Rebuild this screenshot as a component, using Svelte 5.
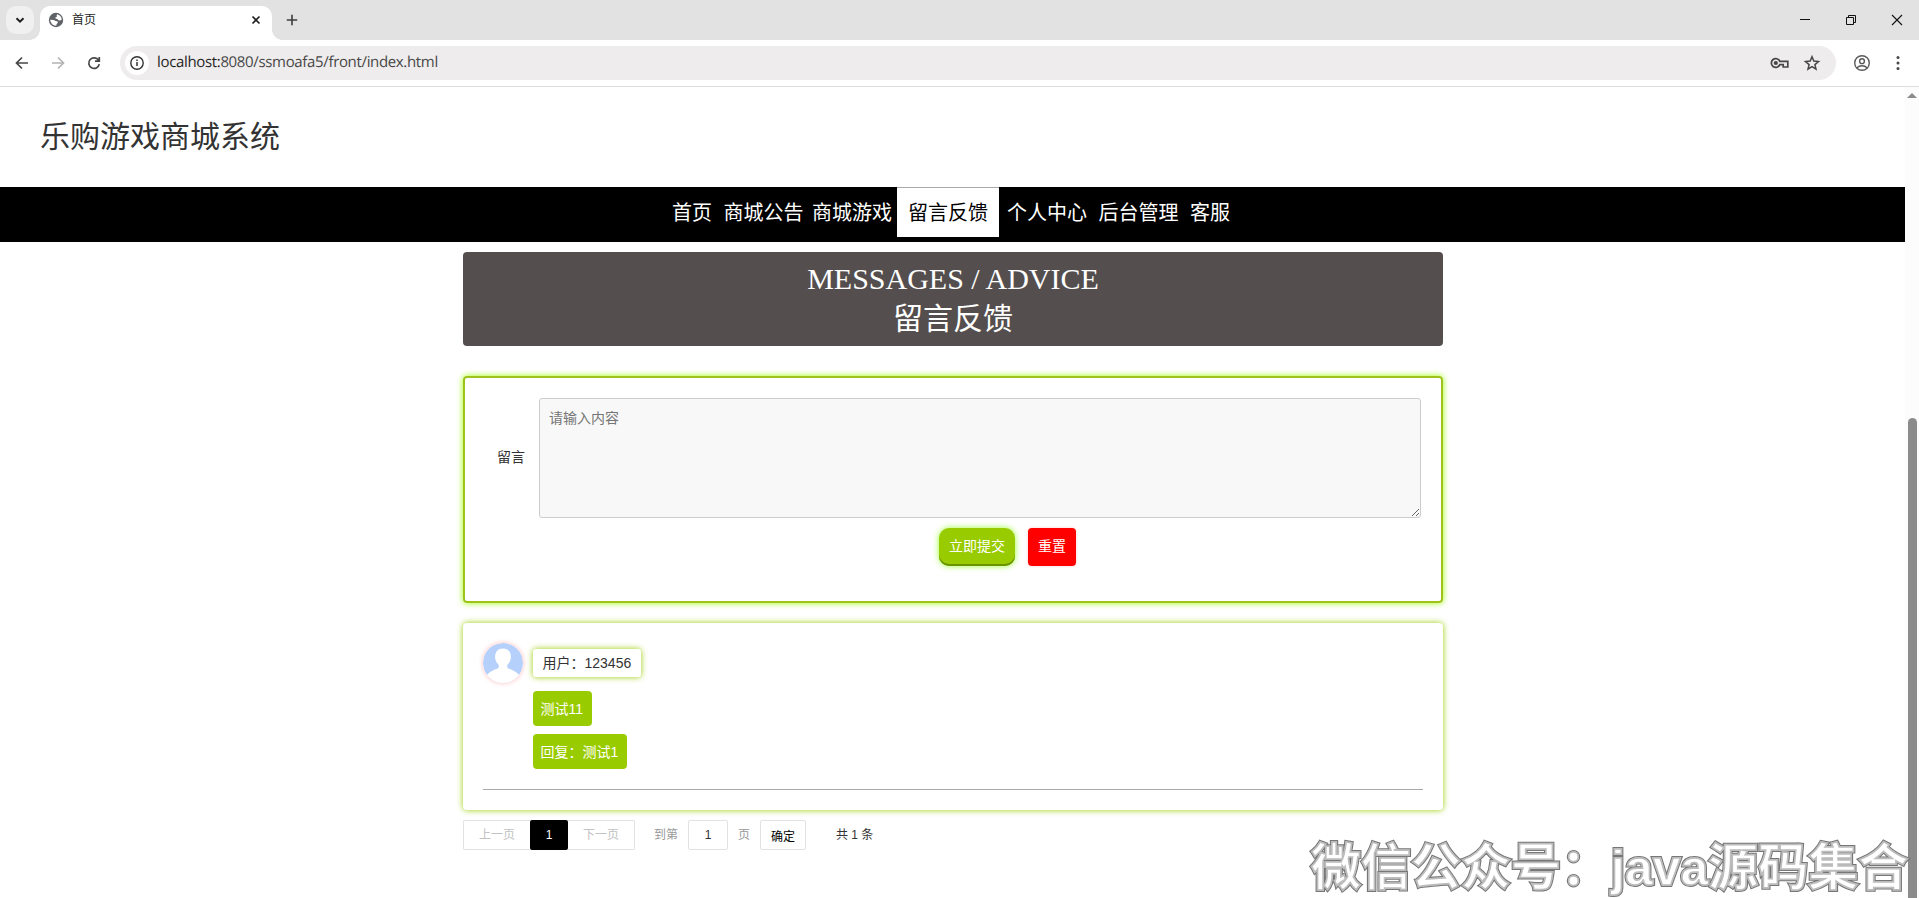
<script>
  const nav = [
    { label: '首页', gap: 0 },
    { label: '商城公告', gap: 11.5 },
    { label: '商城游戏', gap: 8.5 },
    { label: '留言反馈', gap: 5, active: true },
    { label: '个人中心', gap: 8 },
    { label: '后台管理', gap: 11.5 },
    { label: '客服', gap: 11.5 },
  ];
  const replies = ['测试11', '回复：测试1'];
</script>

<div class="window">
  <div class="tabstrip">
    <div class="tablist">
      <svg width="28" height="28" viewBox="0 0 28 28"><path d="M10.500 12.300l3.500 3.400 3.500-3.400" fill="none" stroke="#1f1f1f" stroke-width="2" /></svg>
    </div>
    <div class="tab">
      <svg class="globe" width="16" height="16" viewBox="0 0 16 16">
        <circle cx="8" cy="8" r="7.200" fill="#5f6368" />
        <path d="M9 2.300c2.700.4 4.700 2.700 4.800 5.500L12 8.600l-1.700-.3-.8-1.400-1.800-.2-.4-1.200 1.500-.5-.1-1.400zM2.200 7.800l3.700.1 1.600 1.200 1.700.2.8 1.500-1.400 1.300-.3 1.600c-3.200.1-5.900-2.500-6.100-5.900z" fill="#fff" />
      </svg>
      <span class="tabtitle">首页</span>
      <svg class="close" width="16" height="16" viewBox="0 0 16 16"><path d="M4.500 4.500l7 7M11.500 4.500l-7 7" stroke="#1f1f1f" stroke-width="1.600" /></svg>
    </div>
    <svg class="plus" width="16" height="16" viewBox="0 0 16 16"><path d="M8 2.800v10.400M2.800 8h10.400" stroke="#3c3c3c" stroke-width="1.600" /></svg>
    <div class="controls">
      <svg width="46" height="40" viewBox="0 0 46 40"><path d="M18 19.500h10" stroke="#111" /></svg>
      <svg width="46" height="40" viewBox="0 0 46 40"><path d="M18.500 17.500h7v7h-7zM20.500 17v-1.500h7v7H26" fill="none" stroke="#111" /></svg>
      <svg width="46" height="40" viewBox="0 0 46 40"><path d="M18 15l10 10M28 15L18 25" stroke="#111" stroke-width="1.100" /></svg>
    </div>
  </div>

  <div class="toolbar">
    <svg width="36" height="36" viewBox="0 0 36 36"><path d="M24 18H13M18 12.500L12.500 18l5.500 5.500" fill="none" stroke="#474747" stroke-width="1.700" /></svg>
    <svg width="36" height="36" viewBox="0 0 36 36"><path d="M12 18h11M18 12.500l5.500 5.500-5.500 5.500" fill="none" stroke="#b4b4b4" stroke-width="1.700" /></svg>
    <svg width="36" height="36" viewBox="0 0 36 36"><path d="M22.600 15.300A5.300 5.300 0 1 0 23.300 19.200M23.300 12v4.200h-4.300" fill="none" stroke="#474747" stroke-width="1.700" /></svg>
    <div class="omnibox">
      <div class="info">
        <svg width="16" height="16" viewBox="0 0 16 16"><circle cx="8" cy="8" r="6.200" fill="none" stroke="#333" stroke-width="1.400" /><path d="M8 7v4M8 4.500v1.500" stroke="#333" stroke-width="1.500" /></svg>
      </div>
      <span class="url"><b>localhost:</b>8080/ssmoafa5/front/index.html</span>
      <svg class="key" width="20" height="16" viewBox="0 0 20 16"><path d="M9.800 6.300A4.400 4.400 0 1 0 9.800 9.700H13.200V12H17.800V6.300Z" fill="none" stroke="#474747" stroke-width="1.700" /><circle cx="5.800" cy="8" r="2.100" fill="#474747" /></svg>
      <svg class="star" width="18" height="18" viewBox="0 0 18 18"><path d="M9 2.700l1.800 4.400 4.700.4-3.600 3.100 1.100 4.600L9 12.700l-4 2.500 1.100-4.600-3.600-3.100 4.700-.4z" fill="none" stroke="#474747" stroke-width="1.500" /></svg>
    </div>
    <svg class="profile" width="18" height="18" viewBox="0 0 18 18"><g fill="none" stroke="#5a5a5a" stroke-width="1.400"><circle cx="9" cy="9" r="7.300" /><circle cx="9" cy="7.200" r="2.400" /><path d="M3.800 14c2.800-3 7.600-3 10.400 0" /></g></svg>
    <svg class="dots" width="6" height="18" viewBox="0 0 6 18" fill="#474747"><circle cx="3" cy="3.600" r="1.500" /><circle cx="3" cy="9" r="1.500" /><circle cx="3" cy="14.400" r="1.500" /></svg>
  </div>

  <div class="view">
    <main>
      <header><h1>乐购游戏商城系统</h1></header>
      <nav>
        {#each nav as item}
          <a class:active={item.active} style="margin-left: {item.gap}px">{item.label}</a>
        {/each}
      </nav>

      <div class="container">
        <div class="banner">
          <div>MESSAGES / ADVICE</div>
          <div class="cn">留言反馈</div>
        </div>

        <form class="form" onsubmit={(e) => e.preventDefault()}>
          <div class="field">
            <label for="content">留言</label>
            <textarea id="content" placeholder="请输入内容"></textarea>
          </div>
          <div class="actions">
            <button class="submit" type="submit">立即提交</button>
            <button class="reset" type="reset">重置</button>
          </div>
        </form>

        <section class="messages">
          <div class="user">
            <svg class="avatar" width="40" height="40" viewBox="0 0 40 40">
              <circle cx="20" cy="20" r="20" fill="#b4d0fb" />
              <path d="M20 5.500c5 0 8 3.600 7.900 8.400-.1 3.400-1.600 5.900-3.300 7.700-.7 1.400-.4 3.200.8 4 3.800 1.300 7.800 3 10.800 6.400A20 20 0 0 1 3.800 32c3-3.400 7-5.100 10.800-6.400 1.200-.8 1.500-2.600.8-4-1.700-1.800-3.200-4.300-3.300-7.700C12 9.100 15 5.500 20 5.500z" fill="#fff" />
            </svg>
            <span class="name">用户：123456</span>
          </div>
          <div class="bubbles">
            {#each replies as text}
              <div class="bubble">{text}</div>
            {/each}
          </div>
        </section>

        <div class="pager">
          <span class="prev">上一页</span><span class="current">1</span><span class="next">下一页</span>
          <span class="goto">到第</span><input value="1" /><span class="unit">页</span>
          <button>确定</button><span class="total">共 1 条</span>
        </div>
      </div>
    </main>
    <div class="scrollbar">
      <div class="up"></div>
      <div class="thumb"></div>
    </div>
  </div>
  <div class="watermark" data-text="微信公众号：java源码集合">微信公众号：java源码集合</div>
</div>

<style>
  :global(body) { background: #fff; overflow: hidden; }
  * { box-sizing: border-box; }
  svg { display: block; flex: none; }
  .window { width: 1919px; height: 898px; position: relative; overflow: hidden; display: flex; flex-direction: column; font: 14px 'Liberation Sans', 'Noto Sans CJK SC', sans-serif; color: #333; }
  .tabstrip { height: 40px; flex: none; display: flex; background: #e2e2e2; padding-left: 6px; }
  .tablist { width: 28px; height: 28px; margin: 6px 6px 0 0; border-radius: 10px; background: #f0f0f0; }
  .tab { position: relative; width: 232px; height: 34px; margin-top: 6px; padding: 0 8px 6px; display: flex; align-items: center; background: #fff; border-radius: 10px 10px 0 0; }
  .tab::before, .tab::after { content: ''; position: absolute; bottom: 0; width: 10px; height: 10px; }
  .tab::before { left: -10px; background: radial-gradient(circle at 0 0, transparent 9.500px, #fff 10px); }
  .tab::after { right: -10px; background: radial-gradient(circle at 100% 0, transparent 9.500px, #fff 10px); }
  .tabtitle { font-size: 12px; line-height: 16px; color: #1f1f1f; margin-left: 8px; flex: 1; }
  .plus { margin: 12px 0 0 12px; }
  .controls { display: flex; margin-left: auto; margin-right: -1px; }
  .toolbar { height: 47px; flex: none; display: flex; align-items: center; padding: 0 18px 0 4px; border-bottom: 1px solid #dedede; border-radius: 8px 8px 0 0; background: #fff; }
  .omnibox { width: 1716px; height: 34px; margin-left: 8px; border-radius: 17px; background: #eeecec; display: flex; align-items: center; padding: 0 15px 0 5px; }
  .info { width: 24px; height: 24px; border-radius: 12px; background: #fff; display: grid; place-items: center; }
  .url { font: 15px/20px 'Open Sans', sans-serif; text-rendering: geometricPrecision; letter-spacing: -0.34px; color: #474747; margin: -2px 0 0 8px; flex: 1; white-space: nowrap; }
  .url b { font-weight: 400; color: #1f1f1f; }
  .star { margin-left: 13px; }
  .profile { margin-left: 17px; }
  .dots { margin-left: 24px; }
  .view { flex: 1; display: flex; min-height: 0; overflow: hidden; }
  main { width: 1905px; flex: none; }
  header { height: 100px; padding-left: 40px; display: flex; align-items: center; }
  h1 { margin: 0; font-size: 30px; font-weight: 400; line-height: 40px; }
  nav { height: 55px; background: #000; display: flex; padding-left: 672px; }
  nav a { height: 50px; line-height: 52px; font-size: 20px; color: #fff; white-space: nowrap; }
  nav a.active { background: #fff; color: #000; padding: 0 11px; border-top: 1px solid #aaa; line-height: 50px; }
  .container { width: 980px; margin-left: 463px; }
  .banner { height: 94px; margin-top: 10px; border-radius: 4px; background: #544e4e; color: #fff; text-align: center; font: 30px/39px 'Liberation Serif', 'Noto Sans CJK SC', serif; padding-top: 7px; }
  .banner .cn { line-height: 36px; font-family: 'Noto Sans CJK SC', sans-serif; }
  .form { height: 227px; margin-top: 30px; padding: 20px; border: 2px solid #9fc31a; border-radius: 4px; box-shadow: 0 0 6px #9f0; }
  .field { display: flex; align-items: center; justify-content: flex-end; gap: 14px; }
  label { padding-bottom: 4px; }
  textarea { width: 882px; height: 120px; border: 1px solid #ccc; border-radius: 3px; background: #f8f8f8; padding: 9px; font: 14px/21px 'Liberation Sans', 'Noto Sans CJK SC', sans-serif; display: block; margin: 0; }
  .actions { display: flex; gap: 13px; margin: 10px 0 0 454px; }
  button { font-family: inherit; cursor: pointer; }
  .actions button { height: 38px; padding: 0 0 4px; border: 0; font-size: 14px; color: #fff; }
  .actions .submit { width: 76px; border-radius: 10px; background: #9c0; box-shadow: 0 0 6px #9f3, inset 0 -2px 0 #6b9200; }
  .actions .reset { width: 48px; border-radius: 4px; background: red; box-shadow: 0 0 3px #fcc; }
  .messages { height: 187px; margin-top: 20px; padding: 20px; border-radius: 4px; box-shadow: 0 0 6px #9c0; }
  .user { display: flex; align-items: center; gap: 10px; }
  .avatar { border-radius: 50%; box-shadow: 0 0 5px #fbb; }
  .name { height: 28px; line-height: 28px; padding: 0 9.500px; border-radius: 3px; box-shadow: 0 0 6px #9c0; }
  .bubbles { display: flex; flex-direction: column; align-items: flex-start; gap: 8px; padding: 8px 0 20px 50px; border-bottom: 1px solid #aaa; }
  .bubble { height: 35px; line-height: 36px; padding: 0 8.500px 0 7.500px; border-radius: 4px; background: #9c0; color: #fff; }
  .pager { display: flex; height: 30px; margin-top: 10px; font-size: 12px; line-height: 28px; }
  .prev, .next { width: 67px; border: 1px solid #e2e2e2; text-align: center; color: #c2c2c2; }
  .prev { border-right: 0; border-radius: 2px 0 0 2px; }
  .next { border-left: 0; border-radius: 0 2px 2px 0; }
  .current { width: 38px; line-height: 30px; background: #000; color: #fff; text-align: center; border-radius: 2px; }
  .goto { margin-left: 19px; width: 34px; line-height: 30px; color: #999; }
  input { width: 40px; height: 30px; padding: 0; border: 1px solid #e2e2e2; border-radius: 2px; text-align: center; font: 12px 'Liberation Sans', sans-serif; color: #333; }
  .unit { margin-left: 10px; width: 22px; line-height: 30px; color: #999; }
  .pager button { width: 46px; height: 30px; padding: 0; border: 1px solid #e2e2e2; border-radius: 2px; background: #fff; font-size: 12px; color: #000; }
  .total { margin-left: 30px; line-height: 30px; }
  .scrollbar { width: 14px; background: #fcfcfc; display: flex; flex-direction: column; align-items: center; }
  .up { margin-top: 6px; border: 5px solid transparent; border-top: 0; border-bottom: 5px solid #8b8b8b; }
  .thumb { width: 9px; margin-top: 320px; height: 500px; flex: none; border-radius: 5px; background: #8b8b8b; }
  .watermark { position: absolute; left: 1311px; top: 831px; font: 700 50px/74px 'Liberation Sans', 'Noto Sans CJK SC', sans-serif; white-space: nowrap; color: #777; -webkit-text-stroke: 4px #777; }
  .watermark::before { content: attr(data-text); position: absolute; left: 0; top: 0; color: #bdbdbd; -webkit-text-stroke: 1.800px #bdbdbd; }
  .watermark::after { content: attr(data-text); position: absolute; left: 0; top: 0; color: #fff; -webkit-text-stroke: 1.500px #bdbdbd; }
</style>
